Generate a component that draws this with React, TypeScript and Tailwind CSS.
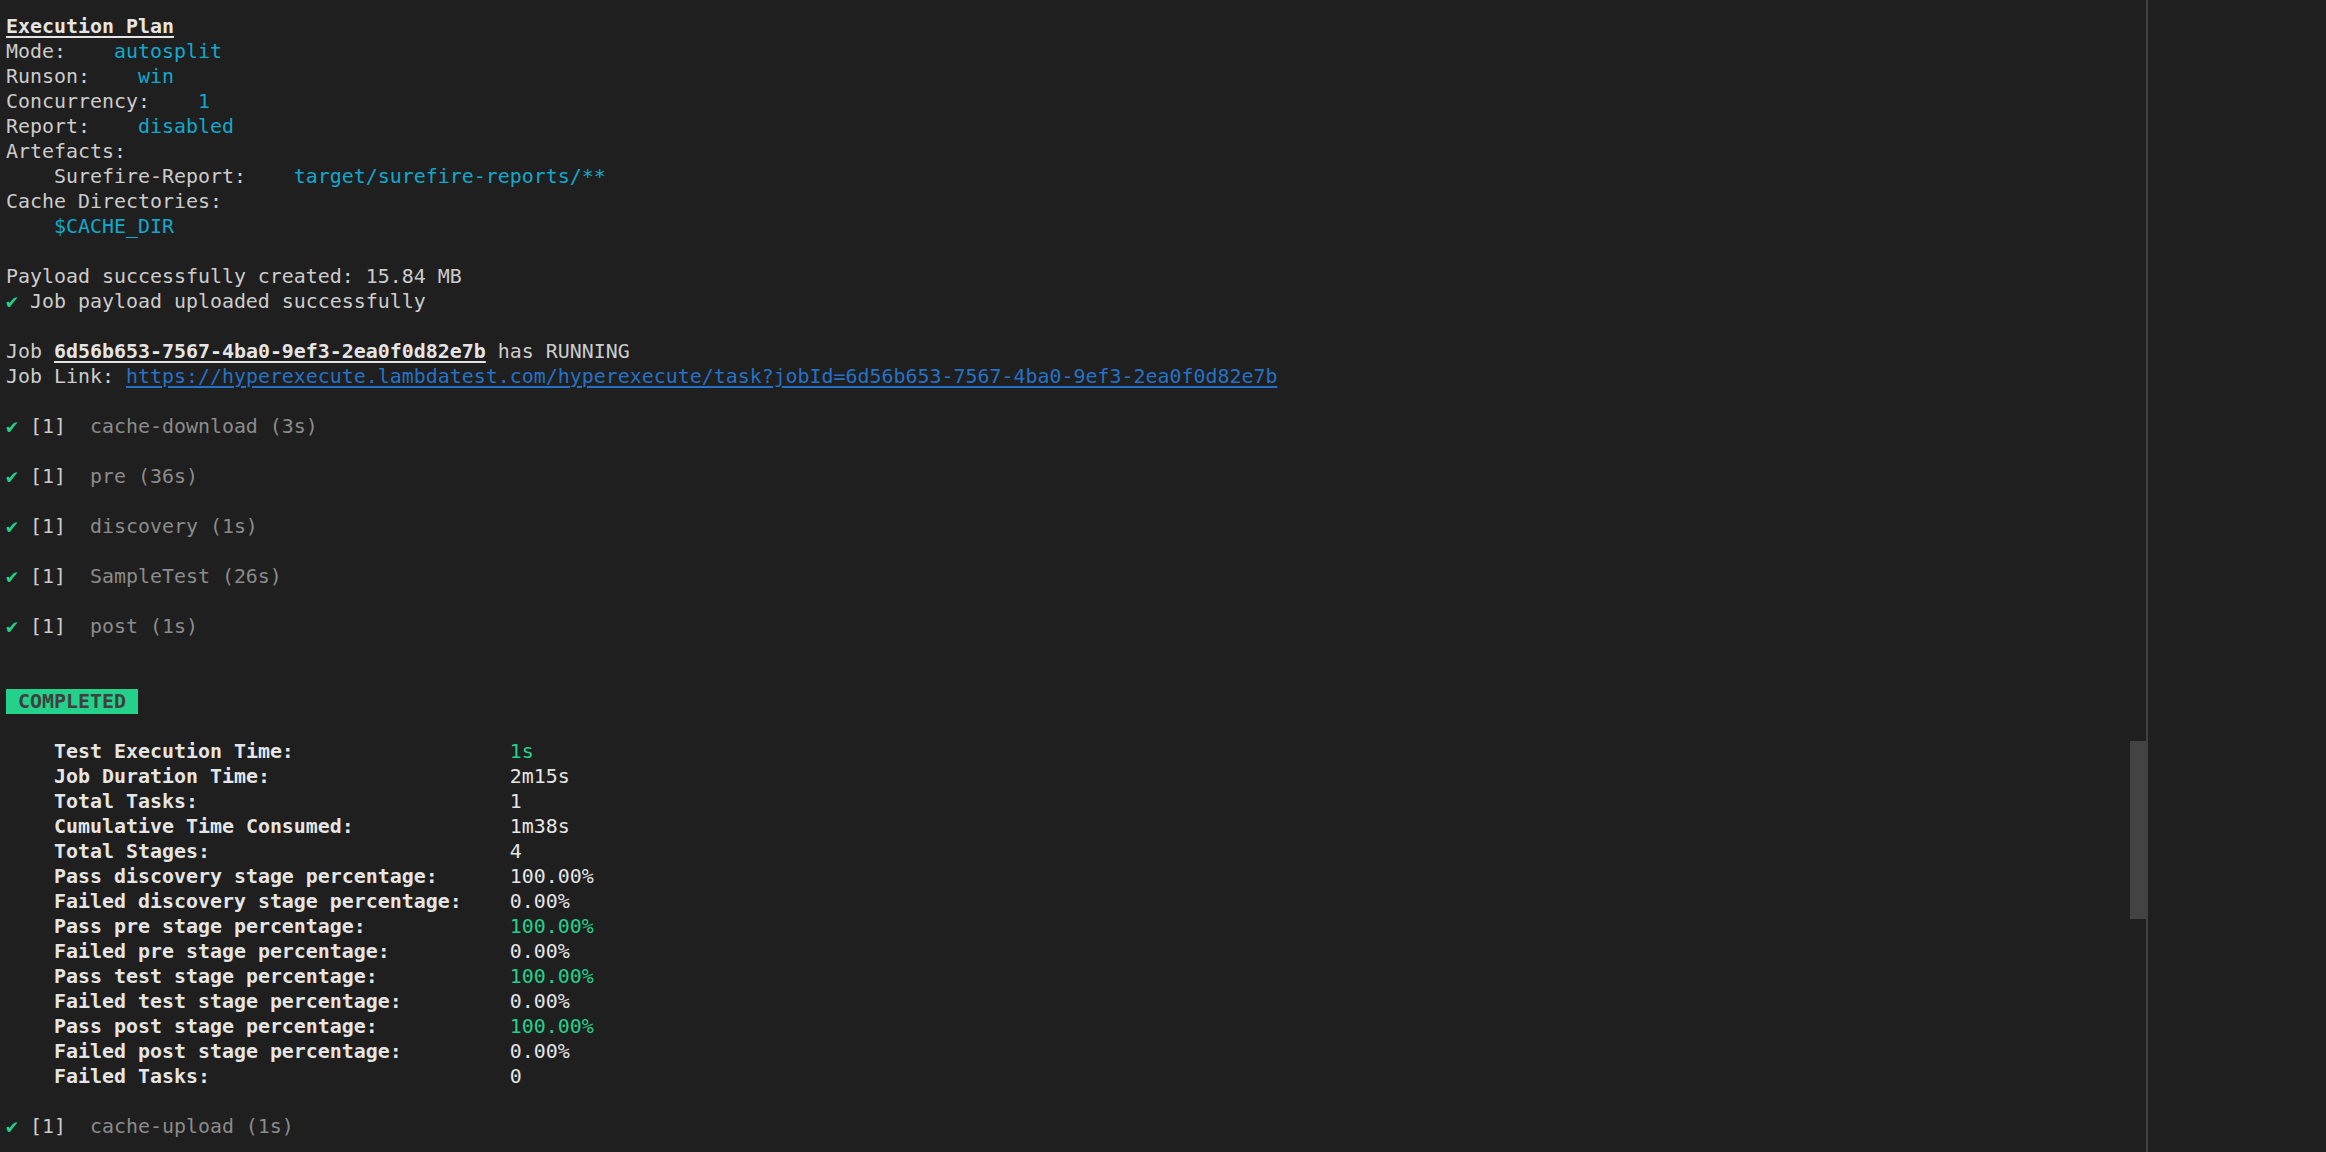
import React from "react";

const CYAN = "text-[#11a8cd]";
const GREEN = "text-[#23d18b]";

type Row = [label: string, value: string, green?: boolean];

const summary: Row[] = [
  ["Test Execution Time:", "1s", true],
  ["Job Duration Time:", "2m15s"],
  ["Total Tasks:", "1"],
  ["Cumulative Time Consumed:", "1m38s"],
  ["Total Stages:", "4"],
  ["Pass discovery stage percentage:", "100.00%"],
  ["Failed discovery stage percentage:", "0.00%"],
  ["Pass pre stage percentage:", "100.00%", true],
  ["Failed pre stage percentage:", "0.00%"],
  ["Pass test stage percentage:", "100.00%", true],
  ["Failed test stage percentage:", "0.00%"],
  ["Pass post stage percentage:", "100.00%", true],
  ["Failed post stage percentage:", "0.00%"],
  ["Failed Tasks:", "0"],
];

function Line({ children }: { children?: React.ReactNode }) {
  return <div className="h-[25px] whitespace-pre">{children ?? " "}</div>;
}

function Check() {
  return <span className={`inline-block w-[1ch] ${GREEN}`}>✔</span>;
}

function Stage({ name }: { name: string }) {
  return (
    <>
      <Line>
        <Check /> [1]  <span className="text-[#8b8b8b]">{name}</span>
      </Line>
      <Line />
    </>
  );
}

export default function App() {
  return (
    <div className="flex h-[1152px] w-full overflow-hidden bg-[#1f1f1f] font-['DejaVu_Sans_Mono',monospace] text-[19.93px] leading-[25px] text-[#cccccc]">
      <div className="relative w-[2146px] shrink-0 pl-[6px] pt-[14px]">
        <Line>
          <span className="font-bold text-[#e5e5e5] underline decoration-[2px] underline-offset-[3px]">
            Execution Plan
          </span>
        </Line>
        <Line>
          Mode:    <span className={CYAN}>autosplit</span>
        </Line>
        <Line>
          Runson:    <span className={CYAN}>win</span>
        </Line>
        <Line>
          Concurrency:    <span className={CYAN}>1</span>
        </Line>
        <Line>
          Report:    <span className={CYAN}>disabled</span>
        </Line>
        <Line>Artefacts:</Line>
        <Line>
          {"    Surefire-Report:    "}
          <span className={CYAN}>target/surefire-reports/**</span>
        </Line>
        <Line>Cache Directories:</Line>
        <Line>
          {"    "}
          <span className={CYAN}>$CACHE_DIR</span>
        </Line>
        <Line />
        <Line>Payload successfully created: 15.84 MB</Line>
        <Line>
          <Check /> Job payload uploaded successfully
        </Line>
        <Line />
        <Line>
          Job{" "}
          <span className="font-bold text-[#e5e5e5] underline decoration-[2px] underline-offset-[3px]">
            6d56b653-7567-4ba0-9ef3-2ea0f0d82e7b
          </span>{" "}
          has RUNNING
        </Line>
        <Line>
          Job Link:{" "}
          <span className="text-[#2472c8] underline decoration-[2px] underline-offset-[3px]">
            https://hyperexecute.lambdatest.com/hyperexecute/task?jobId=6d56b653-7567-4ba0-9ef3-2ea0f0d82e7b
          </span>
        </Line>
        <Line />
        <Stage name="cache-download (3s)" />
        <Stage name="pre (36s)" />
        <Stage name="discovery (1s)" />
        <Stage name="SampleTest (26s)" />
        <Stage name="post (1s)" />
        <Line />
        <Line>
          <span className="inline-block h-[25px] bg-[#23d18b] font-bold text-[#3f3f3f]"> COMPLETED </span>
        </Line>
        <Line />
        {summary.map(([label, value, green]) => (
          <Line key={label}>
            {"    "}
            <span className="inline-block w-[38ch] font-bold text-[#e5e5e5]">{label}</span>
            <span className={green ? GREEN : "text-[#e5e5e5]"}>{value}</span>
          </Line>
        ))}
        <Line />
        <Stage name="cache-upload (1s)" />

        {/* scrollbar thumb */}
        <div className="absolute right-0 top-[741px] h-[178px] w-[16px] bg-[#434343]" />
      </div>
      <div className="w-[2px] shrink-0 bg-[#414141]" />
      <div className="flex-1" />
    </div>
  );
}
